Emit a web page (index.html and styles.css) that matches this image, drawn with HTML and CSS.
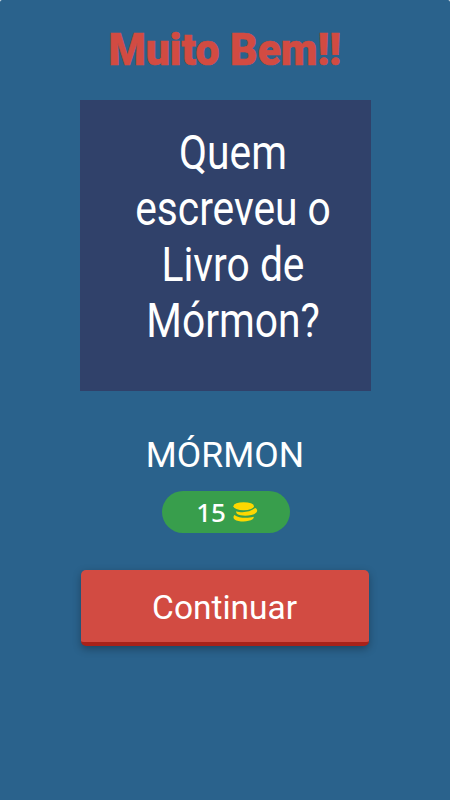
FILE: index.html
```
<!DOCTYPE html>
<html lang="pt">
<head>
    <meta charset="UTF-8">
    <meta name="viewport" content="width=device-width, initial-scale=1.0">
    <title>Muito Bem!!</title>
    <link rel="stylesheet" href="styles.css">
</head>
<body>
    <div class="container">
        <h1>Muito Bem!!</h1>
        <div class="question">
            <p>Quem<br>escreveu o<br>Livro de<br>Mórmon?</p>
        </div>
        <p class="answer">MÓRMON</p>
        <div class="coins">
            <span>15</span>
            <svg width="25" height="20" viewBox="0 0 25 20" fill="#fdd800">
                <ellipse cx="10.7" cy="4.2" rx="10.3" ry="4"/>
                <path d="M3.3 9.2C8 11 17 10.6 22 6.1C23.8 6.5 24.5 8 24 9.6C22 14 8.5 14.8 4.2 12C3.2 11.3 3 10.2 3.3 9.2Z"/>
                <path d="M1.4 13C5.5 16.2 15 16.6 20.4 14.7C21.2 15.4 20.8 16.4 19.6 17.3C15.5 20.2 5.5 20.1 1.6 17.4C.1 16.2 .2 14.2 1.4 13Z"/>
            </svg>
        </div>
        <button type="button"><span>Continuar</span></button>
    </div>
</body>
</html>
```
FILE: styles.css
```
html {
    background-color: white;
}
body {
    font-family: Roboto, sans-serif;
    margin: 0;
}
.container {
    display: flex;
    flex-direction: column;
    align-items: center;
    height: 800px;
    overflow: hidden;
    border-radius: 2px 2px 0 0;
    background-color: #2a628c;
    color: white;
}
h1 {
    color: #d24b42;
    font-size: 43.5px;
    font-weight: 900;
    line-height: 52px;
    margin: 25px 0 23px;
    white-space: nowrap;
    transform: scaleX(0.98);
    -webkit-text-stroke: 0.6px #d24b42;
}
.question {
    background-color: #30416a;
    width: 291px;
    height: 291px;
    margin-left: 1px;
    box-sizing: border-box;
    padding: 25px 0 0 15px;
}
.question p {
    margin: 0;
    font-size: 47.4px;
    line-height: 56px;
    text-align: center;
    transform: scaleX(0.86);
}
.answer {
    font-size: 35px;
    line-height: 42px;
    margin: 44px 0 0;
    transform: scaleX(1.015);
}
.coins {
    display: flex;
    justify-content: center;
    align-items: center;
    gap: 7px;
    box-sizing: border-box;
    width: 128px;
    height: 42px;
    margin: 14px 0 0 2px;
    padding-left: 2px;
    border-radius: 21px;
    background-color: #389e4c;
    font-family: "Noto Sans", sans-serif;
    font-size: 26px;
    font-weight: 500;
}
button {
    width: 288px;
    height: 76px;
    margin-top: 37px;
    padding: 2px 0 0;
    border: 0;
    border-bottom: 4px solid #a8221a;
    border-radius: 5px;
    background-color: #d24b42;
    box-shadow: 0 3px 9px rgba(0, 0, 0, 0.3);
    color: white;
    font-family: Roboto, sans-serif;
    font-size: 34px;
    cursor: pointer;
}
button span {
    display: inline-block;
    transform: scaleX(0.985);
}
```
